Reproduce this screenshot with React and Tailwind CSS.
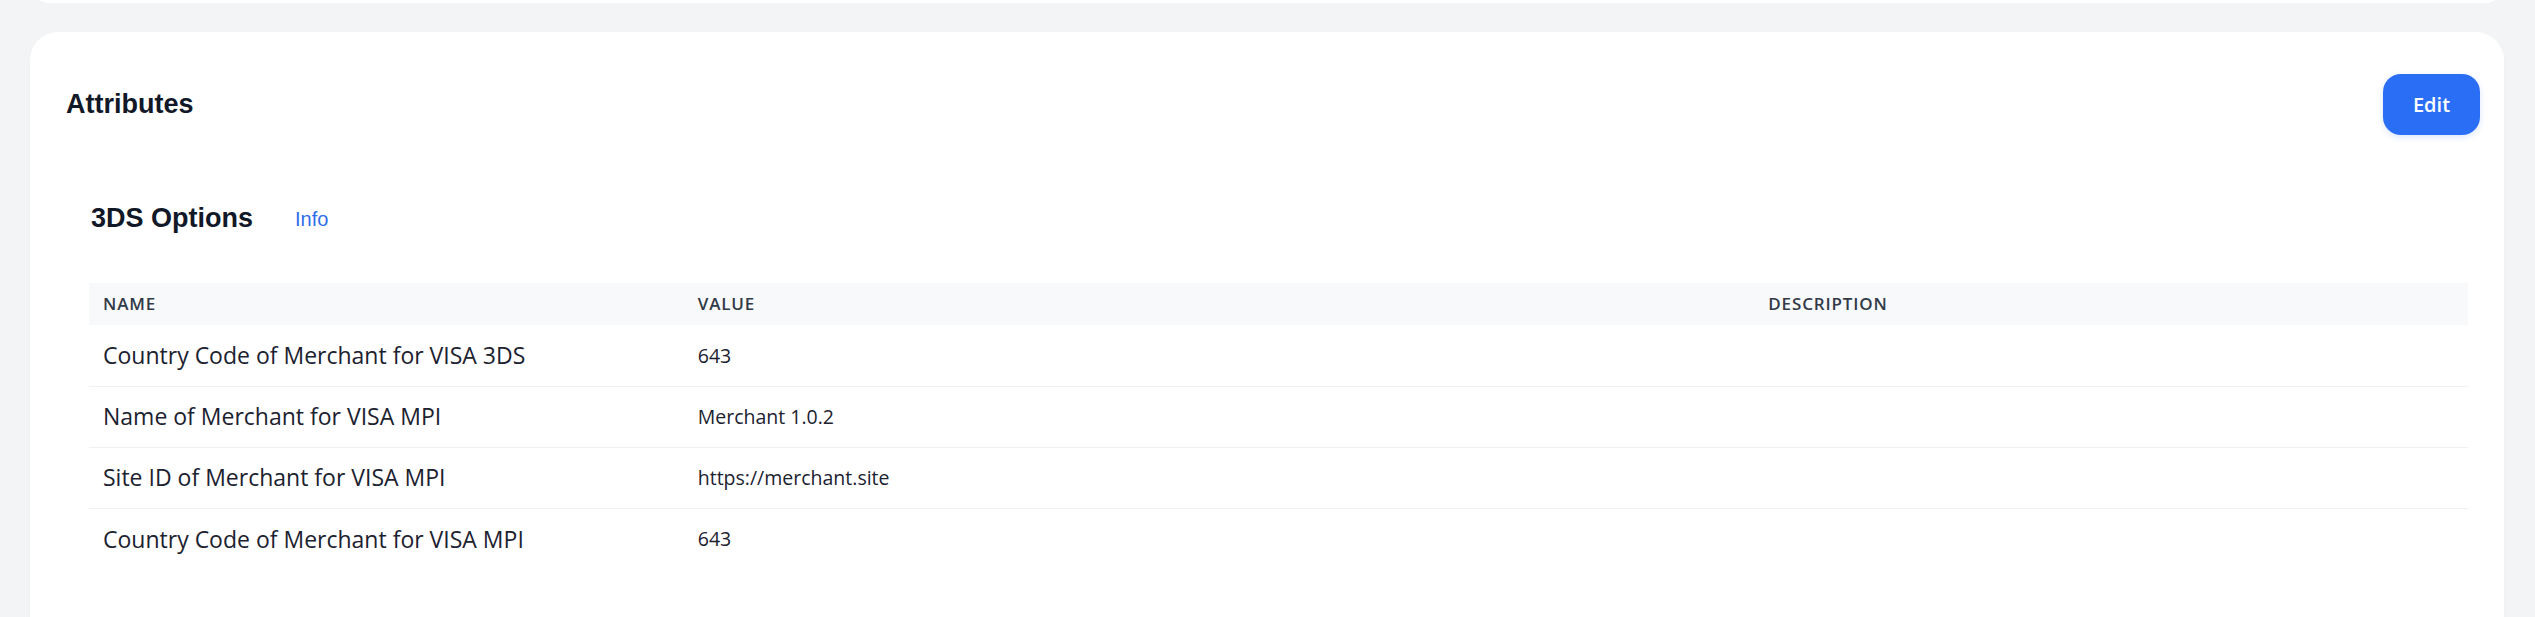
export default function App() {
  const rows = [
    ["Country Code of Merchant for VISA 3DS", "643"],
    ["Name of Merchant for VISA MPI", "Merchant 1.0.2"],
    ["Site ID of Merchant for VISA MPI", "https://merchant.site"],
    ["Country Code of Merchant for VISA MPI", "643"],
  ];
  return (
    <div className="h-screen w-full overflow-hidden bg-[#f3f4f6]">
      <div className="mx-[30px] mt-[-37px] h-[40px] rounded-[28px] bg-white" />
      <div className="mx-[30px] mr-[31px] mt-[29px] rounded-[28px] bg-white pl-[36px] pr-[24px] pt-[42px] pb-[140px] shadow-[0_1px_3px_rgba(0,0,0,0.03)]">
        <div className="flex h-[61px] items-center justify-between">
          <h2 className="mb-[2px] font-['Liberation_Sans',Arial,sans-serif] text-[27px] font-bold leading-[36px] text-[#111827]">
            Attributes
          </h2>
          <button className="h-[61px] w-[97px] rounded-[18px] bg-[#2b6ef6] font-['Open_Sans',sans-serif] text-[20px] font-semibold text-white shadow-[0_2px_6px_rgba(43,110,246,0.18)]">
            Edit
          </button>
        </div>
        <div className="ml-[23px] mr-[12px] mt-[65px]">
          <div className="flex h-[36px] items-center pl-[2px]">
            <h3 className="font-['Liberation_Sans',Arial,sans-serif] text-[27px] font-bold leading-[36px] text-[#111827]">
              3DS Options
            </h3>
            <span className="ml-[42px] mt-[2px] font-['Liberation_Sans',Arial,sans-serif] text-[20px] leading-[24px] text-[#2f6fea]">
              Info
            </span>
          </div>
          <table className="mt-[47px] w-full table-fixed border-collapse font-['Open_Sans',sans-serif]">
            <colgroup>
              <col className="w-[25%]" />
              <col className="w-[45%]" />
              <col className="w-[30%]" />
            </colgroup>
            <thead>
              <tr className="h-[42px] bg-[#f8f9fb]">
                <th className="px-[14px] text-left text-[17px] font-semibold uppercase tracking-[0.05em] text-[#323a47]">Name</th>
                <th className="px-[14px] text-left text-[17px] font-semibold uppercase tracking-[0.05em] text-[#323a47]">Value</th>
                <th className="px-[14px] text-left text-[17px] font-semibold uppercase tracking-[0.05em] text-[#323a47]">Description</th>
              </tr>
            </thead>
            <tbody>
              {rows.map(([name, value], i) => (
                <tr
                  key={i}
                  className={i < rows.length - 1 ? "h-[61px] border-b border-[#eff1f3]" : "h-[61px]"}
                >
                  <td className="px-[14px] text-[23px] text-[#1c2230]">{name}</td>
                  <td className="px-[14px] text-[19.5px] text-[#1c2230]">{value}</td>
                  <td className="px-[14px]" />
                </tr>
              ))}
            </tbody>
          </table>
        </div>
      </div>
    </div>
  );
}
